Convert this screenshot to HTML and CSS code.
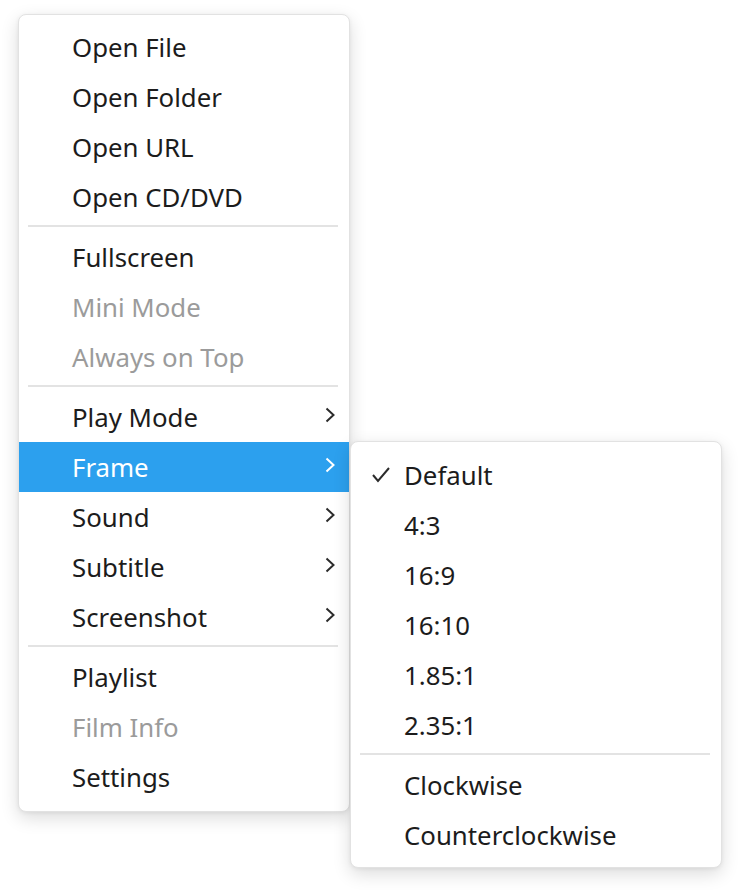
FILE: index.html
```html
<!DOCTYPE html>
<html>
<head>
<meta charset="utf-8">
<link rel="stylesheet" href="styles.css">
</head>
<body>
<div class="stage">
  <div class="menu main">
    <div class="item">Open File</div>
    <div class="item">Open Folder</div>
    <div class="item">Open URL</div>
    <div class="item">Open CD/DVD</div>
    <div class="sep"></div>
    <div class="item">Fullscreen</div>
    <div class="item disabled">Mini Mode</div>
    <div class="item disabled">Always on Top</div>
    <div class="sep"></div>
    <div class="item sub">Play Mode<svg class="arrow" viewBox="0 0 10 16"><polyline points="1.5,1.5 8.5,8 1.5,14.5"/></svg></div>
    <div class="item sub active">Frame<svg class="arrow" viewBox="0 0 10 16"><polyline points="1.5,1.5 8.5,8 1.5,14.5"/></svg></div>
    <div class="item sub">Sound<svg class="arrow" viewBox="0 0 10 16"><polyline points="1.5,1.5 8.5,8 1.5,14.5"/></svg></div>
    <div class="item sub">Subtitle<svg class="arrow" viewBox="0 0 10 16"><polyline points="1.5,1.5 8.5,8 1.5,14.5"/></svg></div>
    <div class="item sub">Screenshot<svg class="arrow" viewBox="0 0 10 16"><polyline points="1.5,1.5 8.5,8 1.5,14.5"/></svg></div>
    <div class="sep"></div>
    <div class="item">Playlist</div>
    <div class="item disabled">Film Info</div>
    <div class="item">Settings</div>
  </div>
  <div class="menu submenu">
    <div class="item checked"><svg class="check" viewBox="0 0 18 16"><polyline points="1,8 6,14 17,1"/></svg>Default</div>
    <div class="item">4:3</div>
    <div class="item">16:9</div>
    <div class="item">16:10</div>
    <div class="item">1.85:1</div>
    <div class="item">2.35:1</div>
    <div class="sep"></div>
    <div class="item">Clockwise</div>
    <div class="item">Counterclockwise</div>
  </div>
</div>
</body>
</html>
```

FILE: styles.css
```css
html, body {
  margin: 0;
  padding: 0;
  background: #ffffff;
}
body {
  width: 740px;
  height: 890px;
  overflow: hidden;
  font-family: "Noto Sans", "Open Sans", sans-serif;
}
.stage {
  display: flex;
  align-items: flex-start;
  padding: 14px 0 0 18px;
}
.menu {
  background: #ffffff;
  border: 1px solid #e2e2e2;
  border-radius: 8px;
  box-shadow: 0 6px 18px rgba(0, 0, 0, 0.14), 0 1px 4px rgba(0, 0, 0, 0.06);
  box-sizing: border-box;
  display: flex;
  flex-direction: column;
}
.main {
  width: 332px;
  padding: 7px 0 9px 0;
}
.submenu {
  width: 372px;
  margin-top: 427px;
  padding: 8px 0 7px 0;
  position: relative;
  z-index: 2;
}
.item {
  height: 50px;
  display: flex;
  align-items: center;
  padding-left: 53px;
  font-size: 25.8px;
  color: #1c1c1c;
  position: relative;
}
.item.disabled {
  color: #9b9b9b;
}
.item.active {
  background: #2ca0ee;
  color: #ffffff;
}
.arrow {
  position: absolute;
  right: 14px;
  top: 15px;
  width: 10px;
  height: 16px;
  fill: none;
  stroke: #2b2b2b;
  stroke-width: 2;
}
.active .arrow {
  stroke: #ffffff;
}
.check {
  position: absolute;
  left: 21px;
  top: 17px;
  width: 18px;
  height: 16px;
  fill: none;
  stroke: #2b2b2b;
  stroke-width: 2;
}
.sep {
  height: 2px;
  background: #e3e3e3;
  margin: 3px 11px 5px 9px;
}
```
